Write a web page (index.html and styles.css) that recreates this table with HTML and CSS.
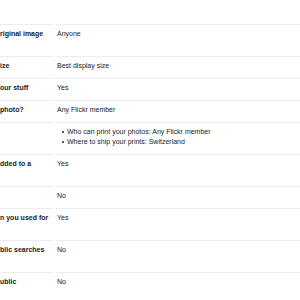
FILE: index.html
```html
<!DOCTYPE html>
<html lang="en">
<head>
<meta charset="utf-8">
<title>Privacy &amp; Permissions</title>
<link rel="stylesheet" href="styles.css">
</head>
<body>
<div class="settings">
  <div class="label two">riginal image</div>
  <div class="value">Anyone</div>

  <div class="label">ize</div>
  <div class="value">Best display size</div>

  <div class="label">our stuff</div>
  <div class="value">Yes</div>

  <div class="label">photo?</div>
  <div class="value">Any Flickr member</div>

  <div class="label"></div>
  <div class="value">
    <ul class="bullets">
      <li>Who can print your photos: Any Flickr member</li>
      <li>Where to ship your prints: Switzerland</li>
    </ul>
  </div>

  <div class="label two">dded to a</div>
  <div class="value">Yes</div>

  <div class="label"></div>
  <div class="value">No</div>

  <div class="label two">n you used for</div>
  <div class="value">Yes</div>

  <div class="label two">blic searches</div>
  <div class="value">No</div>

  <div class="label two">ublic</div>
  <div class="value">No</div>
</div>
</body>
</html>
```
FILE: styles.css
```css
html, body {
  margin: 0;
  padding: 0;
  background: #ffffff;
  overflow: hidden;
}

body {
  font-family: "Liberation Sans", Arial, Helvetica, sans-serif;
  font-size: 7px;
  line-height: 10px;
  color: #212124;
}

.settings {
  display: grid;
  grid-template-columns: 53px 1fr;
  column-gap: 2px;
  margin-top: 24px;
}

.label,
.value {
  border-top: 1px solid #ececec;
  padding: 4px 0 7px;
  min-height: 10px;
}

.label {
  font-weight: bold;
  white-space: nowrap;
  overflow: hidden;
}

.label.two {
  min-height: 20px;
}

.value {
  padding-left: 2px;
}

.bullets {
  list-style: none;
  margin: 0;
  padding: 0 0 0 5px;
}

.bullets li {
  display: flex;
  align-items: center;
}

.bullets li::before {
  content: "";
  width: 2px;
  height: 2px;
  border-radius: 50%;
  background: #212124;
  margin-right: 3px;
  flex: none;
}
```
